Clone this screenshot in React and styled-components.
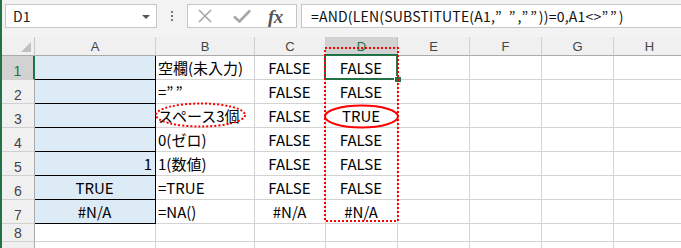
import styled, { createGlobalStyle } from "styled-components"

const GlobalStyle = createGlobalStyle`
  html, body {
    margin: 0;
    padding: 0;
    background: #ffffff;
    overflow: hidden;
  }
`

const CELL_FONT = `"Noto Sans CJK JP", "Noto Sans", sans-serif`
const GRID = "#d4d4d4"
const GREEN = "#217346"

const Window = styled.div`
  width: 681px;
  height: 248px;
  box-sizing: border-box;
  border-left: 2px solid ${GREEN};
  display: flex;
  flex-direction: column;
  overflow: hidden;
  background: #f3f3f3;
`

const FormulaBar = styled.div`
  height: 37px;
  flex: none;
  display: flex;
  align-items: flex-start;
  padding: 4px 0 0 3px;
  box-sizing: border-box;
`

const NameBox = styled.div`
  width: 152px;
  height: 24px;
  box-sizing: border-box;
  border: 1px solid #c6c6c6;
  background: #fff;
  display: flex;
  align-items: center;
  justify-content: space-between;
  padding: 0 6px 0 7px;
  font: 14px ${CELL_FONT};
  color: #222;
`

const Caret = styled.span`
  width: 0;
  height: 0;
  border-left: 4px solid transparent;
  border-right: 4px solid transparent;
  border-top: 4px solid #555;
  margin-top: 1px;
`

const Grip = styled.div`
  width: 30px;
  height: 24px;
  display: flex;
  flex-direction: column;
  align-items: center;
  justify-content: center;
  gap: 2px;

  span {
    width: 2px;
    height: 2px;
    background: #777;
  }
`

const ButtonBox = styled.div`
  width: 110px;
  height: 24px;
  box-sizing: border-box;
  border: 1px solid #c6c6c6;
  background: #fff;
  display: flex;
  align-items: center;
  padding-left: 10px;
`

const IconSlot = styled.span`
  display: flex;
  margin-right: ${(p) => p.$gap}px;
`

const Fx = styled.span`
  font: italic bold 19px "Liberation Serif", "DejaVu Serif", serif;
  color: #555;
  letter-spacing: -0.5px;
  line-height: 1;
`

const FormulaInput = styled.div`
  flex: 1;
  height: 24px;
  margin-left: 4px;
  box-sizing: border-box;
  border: 1px solid #c6c6c6;
  border-right: none;
  background: #fff;
  display: flex;
  align-items: center;
  padding-left: 9px;
  font: 14px ${CELL_FONT};
  letter-spacing: 0.2px;
  color: #111;
  white-space: nowrap;
`

const Quote = styled.span`
  letter-spacing: 2px;
`

const Sheet = styled.div`
  position: relative;
  flex: 1;
  display: grid;
  grid-template-columns: 33px 121px 99px 71px 72px 72px 72px 72px 72px;
  grid-template-rows: 19px repeat(7, 24px) 18px 24px;
  background: #fff;
`

const Corner = styled.div`
  background: #f0f0f0;
  border-right: 1px solid #c8c8c8;
  border-bottom: 1px solid #ababab;
  position: relative;

  &::after {
    content: "";
    position: absolute;
    right: 3px;
    bottom: 3px;
    width: 0;
    height: 0;
    border-left: 10px solid transparent;
    border-bottom: 10px solid #c0c0c0;
  }
`

const ColHead = styled.div`
  background: ${(p) => (p.$active ? "#d2d2d2" : "#f0f0f0")};
  color: ${(p) => (p.$active ? GREEN : "#444")};
  border-right: 1px solid ${(p) => (p.$active ? "#bdbdbd" : "#d0d0d0")};
  border-bottom: 1px solid #ababab;
  display: flex;
  align-items: center;
  justify-content: center;
  font: 13px "Liberation Sans", Arial, sans-serif;
`

const RowHead = styled.div`
  background: ${(p) => (p.$active ? "#d2d2d2" : "#f0f0f0")};
  color: ${(p) => (p.$active ? GREEN : "#444")};
  border-right: ${(p) => (p.$active ? `2px solid ${GREEN}` : "1px solid #ababab")};
  border-bottom: 1px solid #d0d0d0;
  display: flex;
  align-items: flex-end;
  justify-content: center;
  font: 14px "Liberation Sans", Arial, sans-serif;
  line-height: 14px;
  padding-bottom: 1px;
  box-sizing: border-box;
`

const Cell = styled.div`
  position: relative;
  background: ${(p) => (p.$fill ? "#ddebf7" : "#fff")};
  border-right: 1px solid ${(p) => (p.$edge ? "#000" : GRID)};
  border-bottom: 1px solid ${(p) => (p.$edge ? "#000" : GRID)};
  display: flex;
  align-items: flex-end;
  justify-content: ${(p) =>
    p.$align === "right" ? "flex-end" : p.$align === "center" ? "center" : "flex-start"};
  padding: 0 3px 4px 2px;
  box-sizing: border-box;
  font: 15px ${CELL_FONT};
  line-height: 15px;
  color: #000;
  white-space: nowrap;
`

const Selection = styled.div`
  position: absolute;
  left: -2px;
  top: -2px;
  right: -1px;
  bottom: -1px;
  border: 2px solid ${GREEN};
  z-index: 2;

  &::after {
    content: "";
    position: absolute;
    right: -5px;
    bottom: -4px;
    width: 6px;
    height: 5px;
    background: ${GREEN};
    border-left: 1px solid #fff;
    border-top: 1px solid #fff;
  }
`

const Marks = styled.svg`
  position: absolute;
  left: 0;
  top: 0;
  z-index: 3;
  pointer-events: none;
`

const COLS = ["A", "B", "C", "D", "E", "F", "G", "H"]

const DATA = [
  ["", "空欄(未入力)", "FALSE", "FALSE"],
  ["", <>=<Quote>””</Quote></>, "FALSE", "FALSE"],
  ["", "スペース3個", "FALSE", "TRUE"],
  ["", "0(ゼロ)", "FALSE", "FALSE"],
  ["1", "1(数値)", "FALSE", "FALSE"],
  ["TRUE", "=TRUE", "FALSE", "FALSE"],
  ["#N/A", "=NA()", "#N/A", "#N/A"],
]

const alignA = (v) => (v === "1" ? "right" : "center")

const App = () => {
  const rows = [...DATA, ["", "", "", ""], ["", "", "", ""]]
  return (
    <>
      <GlobalStyle />
      <Window>
        <FormulaBar>
          <NameBox>
            D1
            <Caret />
          </NameBox>
          <Grip>
            <span />
            <span />
            <span />
          </Grip>
          <ButtonBox>
            <IconSlot $gap={21}>
              <svg width="14" height="14" viewBox="0 0 14 14">
                <path d="M1 1L13 13M13 1L1 13" stroke="#a6a6a6" strokeWidth="1.6" fill="none" />
              </svg>
            </IconSlot>
            <IconSlot $gap={17}>
              <svg width="18" height="14" viewBox="0 0 18 14">
                <path d="M1 7.5L6.5 12.5L17 1.5" stroke="#a6a6a6" strokeWidth="2.6" fill="none" />
              </svg>
            </IconSlot>
            <Fx>fx</Fx>
          </ButtonBox>
          <FormulaInput>
            =AND(LEN(SUBSTITUTE(A1,<Quote>” ”</Quote>,<Quote>””</Quote>))=0,A1&lt;&gt;<Quote>””</Quote>)
          </FormulaInput>
        </FormulaBar>
        <Sheet>
          <Corner />
          {COLS.map((c) => (
            <ColHead key={c} $active={c === "D"}>
              {c}
            </ColHead>
          ))}
          {rows.map((r, i) => {
            const inData = i < DATA.length
            return [
              <RowHead key={`h${i}`} $active={i === 0}>
                {i < 8 ? i + 1 : ""}
              </RowHead>,
              <Cell key={`a${i}`} $fill={inData} $edge={inData} $align={alignA(r[0])}>
                {r[0]}
              </Cell>,
              <Cell key={`b${i}`}>{r[1]}</Cell>,
              <Cell key={`c${i}`} $align="center">
                {r[2]}
              </Cell>,
              <Cell key={`d${i}`} $align="center">
                {i === 0 && <Selection />}
                {r[3]}
              </Cell>,
              ...["E", "F", "G", "H"].map((c) => <Cell key={`${c}${i}`} />),
            ]
          })}
          <Marks width="679" height="211">
            <rect x="323" y="11" width="73" height="173" fill="none" stroke="#ff0000" strokeWidth="2" strokeDasharray="2 2" />
            <ellipse cx="198.5" cy="78" rx="44.5" ry="11.5" fill="none" stroke="#ff0000" strokeWidth="2" strokeDasharray="2 2" />
            <ellipse cx="359.5" cy="79.5" rx="36.5" ry="11" fill="none" stroke="#ff0000" strokeWidth="2" />
          </Marks>
        </Sheet>
      </Window>
    </>
  )
}

export default App
